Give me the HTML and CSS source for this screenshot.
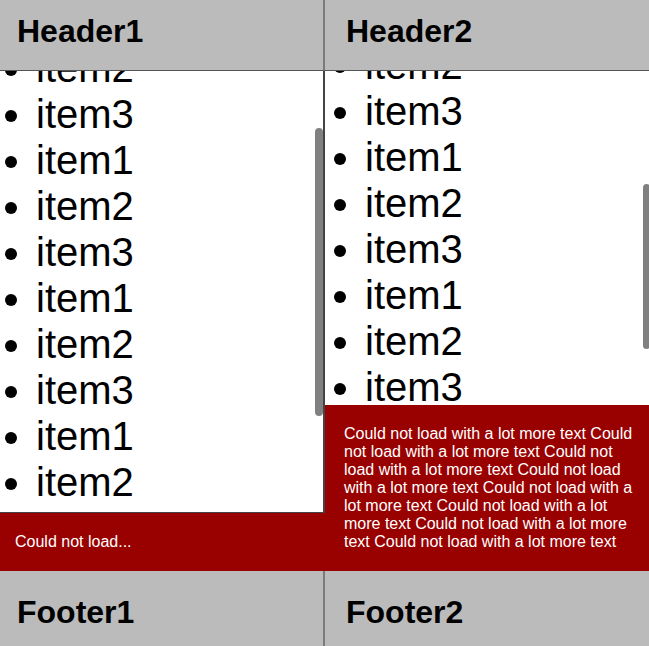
FILE: index.html
```html
<!DOCTYPE html>
<html>
<head>
    <title>Panes</title>
    <link rel="stylesheet" href="styles.css">
</head>
<body>
    <div class="board">
        <section class="pane pane-left">
            <header class="pane-head">Header1</header>
            <div class="pane-scroll">
                <div class="pane-body" id="list1">
                    <ul>
                        <li>item1</li>
                        <li>item2</li>
                        <li>item3</li>
                        <li>item1</li>
                        <li>item2</li>
                        <li>item3</li>
                        <li>item1</li>
                        <li>item2</li>
                        <li>item3</li>
                        <li>item1</li>
                        <li>item2</li>
                        <li>item3</li>
                        <li>item1</li>
                        <li>item2</li>
                    </ul>
                </div>
                <div class="thumb" id="thumb1"></div>
            </div>
            <div class="pane-error">Could not load...</div>
            <footer class="pane-foot">Footer1</footer>
        </section>

        <section class="pane pane-right">
            <header class="pane-head">Header2</header>
            <div class="pane-scroll">
                <div class="pane-body" id="list2">
                    <ul>
                        <li>item1</li>
                        <li>item2</li>
                        <li>item3</li>
                        <li>item1</li>
                        <li>item2</li>
                        <li>item3</li>
                        <li>item1</li>
                        <li>item2</li>
                        <li>item3</li>
                        <li>item1</li>
                        <li>item2</li>
                        <li>item3</li>
                        <li>item1</li>
                        <li>item2</li>
                    </ul>
                </div>
                <div class="thumb" id="thumb2"></div>
            </div>
            <div class="pane-error">Could not load with a lot more text Could not load with a lot more text Could not load with a lot more text Could not load with a lot more text Could not load with a lot more text Could not load with a lot more text Could not load with a lot more text Could not load with a lot more text</div>
            <footer class="pane-foot">Footer2</footer>
        </section>
    </div>
    <script src="script.js"></script>
</body>
</html>
```

FILE: styles.css
```css
* {
    margin: 0;
    padding: 0;
    box-sizing: border-box;
}

body {
    font-family: "Liberation Sans", Arial, Helvetica, sans-serif;
    color: #000;
    height: 100vh;
    overflow: hidden;
}

.board {
    display: flex;
    height: 100vh;
}

.pane {
    display: flex;
    flex-direction: column;
    min-height: 0;
}

.pane-left {
    width: 325px;
    --pad: 15px;
}

.pane-right {
    flex: 1;
    --pad: 19px;
}

.pane-head {
    background: #bbbbbb;
    border-bottom: 1px solid #555;
    font-size: 32px;
    font-weight: bold;
    line-height: 37px;
    padding: 13px var(--pad) 20px calc(var(--pad) + 2px);
    flex-shrink: 0;
}

.pane-scroll {
    position: relative;
    flex: 1;
    min-height: 0;
    overflow: hidden;
    background: #fff;
}

.pane-body {
    height: 100%;
    overflow-y: auto;
    scrollbar-width: none;
}

.pane-body::-webkit-scrollbar {
    display: none;
}

.pane-body ul {
    margin: 16px 0;
    padding-left: calc(var(--pad) + 21px);
}

.pane-body li {
    font-size: 40px;
    line-height: 46px;
}

/* overlay scrollbar thumb */
.thumb {
    position: absolute;
    right: 0;
    width: 8px;
    background: #808080;
    border-radius: 4px;
}

.pane-right .thumb {
    width: 7px;
    right: -1px;
}

.pane-left .pane-head,
.pane-left .pane-foot {
    border-right: 2px solid #7a7a7a;
}

.pane-left .pane-scroll {
    border-right: 2px solid #444;
    border-bottom: 1px solid #444;
}

.pane-error {
    background: #990000;
    color: #fff;
    font-size: 16px;
    line-height: 18px;
    padding: 20px 10px 20px var(--pad);
    flex-shrink: 0;
}

.pane-foot {
    background: #bbbbbb;
    height: 75px;
    flex-shrink: 0;
    font-size: 32px;
    font-weight: bold;
    line-height: 37px;
    padding: 23px var(--pad) 0 calc(var(--pad) + 2px);
}
```

FILE: script.js
```js
function place(listId, thumbId, top) {
    var list = document.getElementById(listId);
    var thumb = document.getElementById(thumbId);
    list.scrollTop = top;

    var view = list.clientHeight;
    var full = list.scrollHeight;
    var size = view * view / full;
    var pos = list.scrollTop / (full - view) * (view - size);

    thumb.style.height = size + "px";
    thumb.style.top = pos + "px";
}

place("list1", "thumb1", 88);
place("list2", "thumb2", 229);
```
